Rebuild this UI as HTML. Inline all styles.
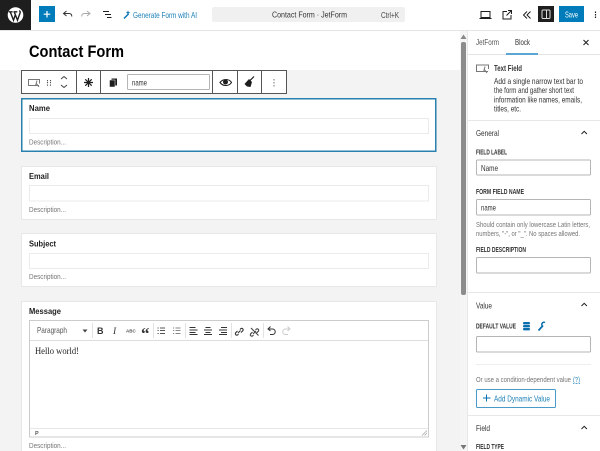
<!DOCTYPE html>
<html><head><meta charset="utf-8"><style>
html,body{margin:0;padding:0;background:#fff;width:600px;height:451px;overflow:hidden}
svg{display:block;filter:blur(.25px)}
text{font-family:"Liberation Sans",sans-serif;font-size:8.5px;fill:#1e1e1e}
.b{font-weight:bold}
.g{fill:#757575;font-size:7.6px}
.l{font-size:7px;font-weight:bold;fill:#333}
.f{font-size:8.2px;fill:#333}
.i{fill:#fff;stroke:#ebebeb;stroke-width:1}
.s{fill:#fff;stroke:#b5b5b5;stroke-width:1}
.c{fill:#fff;stroke:#e8e8e8;stroke-width:1}
.k{fill:none;stroke:#1e1e1e;stroke-width:1}
</style></head><body>
<svg width="600" height="451" viewBox="0 0 600 451" xmlns="http://www.w3.org/2000/svg">
<rect width="600" height="451" fill="#fff"/>
<!-- canvas -->
<rect x="0" y="70" width="460" height="381" fill="#f3f3f3"/>
<rect x="460" y="31" width="8" height="420" fill="#f5f5f5"/>
<rect x="461" y="42" width="5" height="253" rx="2" fill="#8c8c8c"/>
<path d="M460.500 39l3-4.500 3 4.500z" fill="#888"/>
<path d="M460.500 445l3 4.500 3-4.500z" fill="#777"/>
<!-- top bar -->
<rect x="0" y="30" width="600" height="1" fill="#e4e4e4"/>
<rect x="0" y="0" width="31" height="30" fill="#1e1e1e"/>
<circle cx="15.500" cy="15" r="7.800" fill="#fff"/>
<path d="M8.800 11.800h3.800M13.500 11.800h3.800M10.300 12l3.200 8.200 2-6M14.300 12l3.200 8.200 2.600-7.400c.4-1.200-.3-2-1-2" fill="none" stroke="#1e1e1e" stroke-width="1.400"/>
<rect x="39" y="6" width="16" height="16" fill="#007cba"/>
<path d="M47 11v6.500M43.700 14.200h6.600" stroke="#fff" stroke-width="1.200"/>
<path d="M66.500 11l-3 2.500 3 2.500M63.800 13.500h5.200c1.700 0 2.800 1 2.800 3" fill="none" stroke="#333" stroke-width="1"/>
<path d="M87 11l3 2.500-3 2.500M89.700 13.500h-5.200c-1.700 0-2.800 1-2.800 3" fill="none" stroke="#aaa" stroke-width="1"/>
<path d="M103 11.500h6M105 14.500h6M107 17.500h4.500" class="k"/>
<path d="M124 18.500l4.500-4.500" stroke="#0a76b5" stroke-width="1.500"/>
<path d="M128 10.500l.7 1.500 1.500.7-1.500.7-.7 1.500-.7-1.500-1.500-.7 1.500-.7z" fill="#0a76b5"/>
<text x="133" y="18" textLength="64" lengthAdjust="spacingAndGlyphs" style="fill:#1a7fb8;font-size:8.200px">Generate Form with AI</text>
<rect x="212" y="7" width="193" height="15" rx="2" fill="#f0f0f0"/>
<text x="272" y="17.500" textLength="75" lengthAdjust="spacingAndGlyphs" class="f">Contact Form · JetForm</text>
<text x="381" y="18" textLength="18" lengthAdjust="spacingAndGlyphs" class="f" style="fill:#444">Ctrl+K</text>
<path d="M481 11.500h9v6h-9zM479.500 18.500h12" class="k"/>
<path d="M507 11.500h-4v7.500h8v-4M506.500 15.500l5-5M508 10.500h3.500v3.500" class="k"/>
<path d="M527 11.500l-3.500 3.500 3.500 3.500M530.500 11.500l-3.500 3.500 3.500 3.500" class="k"/>
<rect x="538" y="6" width="16" height="16" fill="#1e1e1e"/>
<rect x="542" y="10" width="8" height="8.500" rx="1" fill="none" stroke="#ddd" stroke-width="1"/>
<rect x="546" y="10" width="1" height="8.500" fill="#ddd"/>
<rect x="559" y="6" width="25" height="16" fill="#007cba"/>
<text x="565" y="17.500" textLength="13" lengthAdjust="spacingAndGlyphs" style="fill:#fff;font-size:8.200px">Save</text>
<path d="M595.500 11.500v1.500M595.500 14v1.500M595.500 16.500v1.500" stroke="#1e1e1e" stroke-width="1.200"/>
<!-- title -->
<text x="29" y="57" textLength="95" lengthAdjust="spacingAndGlyphs" class="b" style="font-size:16.500px;fill:#000">Contact Form</text>
<!-- block toolbar -->
<rect x="21.500" y="70.500" width="265" height="23" fill="#fff" stroke="#555" stroke-width="1"/>
<path d="M76.500 70v24M100.500 70v24M212.500 70v24M237.500 70v24M261.500 70v24" stroke="#555" stroke-width="1"/>
<path d="M39 85.500h-10.500v-6h11v4" fill="none" stroke="#777" stroke-width="1"/>
<path d="M37 80.500l-1.500 5.500M36 83l3 4" fill="none" stroke="#777" stroke-width="1"/>
<path d="M47.500 80v1.200M47.500 82v1.200M47.500 84.500v1.200M50.500 80v1.200M50.500 82v1.200M50.500 84.500v1.200" stroke="#555" stroke-width="1.100"/>
<path d="M61 79l3-2.500 3 2.500M61 85l3 2.500 3-2.500" fill="none" stroke="#444" stroke-width="1"/>
<path d="M88.500 78v9M84 82.500h9M85.300 79.300l6.400 6.400M91.700 79.300l-6.400 6.400" stroke="#1e1e1e" stroke-width="1.200"/>
<rect x="111.500" y="78.500" width="5.500" height="7" fill="#1e1e1e"/>
<rect x="109.500" y="80" width="5.500" height="7" fill="#1e1e1e" stroke="#fff" stroke-width=".5"/>
<rect x="127.500" y="74.500" width="82" height="15" rx="1" fill="#fff" stroke="#b5b5b5" stroke-width="1"/>
<text x="132" y="85.500" textLength="15" lengthAdjust="spacingAndGlyphs" class="f">name</text>
<path d="M220 82.500c3-4 9-4 11.500 0c-2.500 4-8.500 4-11.500 0z" fill="#fff" stroke="#1e1e1e" stroke-width="1.100"/>
<circle cx="225.500" cy="82" r="2.500" fill="#1e1e1e"/>
<path d="M254 76.500l-4 4" stroke="#1e1e1e" stroke-width="1.200"/>
<path d="M249 79l3 3-1.500 5-3.500-.5-2.500-2.500z" fill="#1e1e1e"/>
<path d="M274 79v1.500M274 82v1.500M274 85v1.500" stroke="#999" stroke-width="1.400"/>
<!-- Name card -->
<rect x="21.750" y="98.750" width="414" height="52.500" fill="#fff" stroke="#2a80ae" stroke-width="1.500"/>
<text x="29" y="111" textLength="21" lengthAdjust="spacingAndGlyphs" class="b">Name</text>
<rect x="29.500" y="118.500" width="399" height="15" class="i"/>
<text x="29" y="144.500" textLength="37" lengthAdjust="spacingAndGlyphs" class="g">Description...</text>
<!-- Email -->
<rect x="21.500" y="166.500" width="415" height="53" class="c"/>
<text x="29" y="179" textLength="20" lengthAdjust="spacingAndGlyphs" class="b">Email</text>
<rect x="29.500" y="185.500" width="399" height="15.500" class="i"/>
<text x="29" y="212" textLength="37" lengthAdjust="spacingAndGlyphs" class="g">Description...</text>
<!-- Subject -->
<rect x="21.500" y="233.500" width="415" height="53" class="c"/>
<text x="29" y="246.500" textLength="27" lengthAdjust="spacingAndGlyphs" class="b">Subject</text>
<rect x="29.500" y="253.500" width="399" height="15" class="i"/>
<text x="29" y="279" textLength="37" lengthAdjust="spacingAndGlyphs" class="g">Description...</text>
<!-- Message -->
<rect x="21.500" y="301.500" width="415" height="160" class="c"/>
<text x="29" y="314" textLength="32" lengthAdjust="spacingAndGlyphs" class="b">Message</text>
<rect x="29.500" y="320.500" width="399" height="116.500" fill="#fff" stroke="#ccc" stroke-width="1"/>
<rect x="30" y="340" width="398" height="1" fill="#ddd"/>
<rect x="30" y="428" width="398" height="1" fill="#e8e8e8"/>
<text x="37" y="333" textLength="30" lengthAdjust="spacingAndGlyphs" style="font-size:8.200px;fill:#555">Paragraph</text>
<path d="M82.500 329.500h5l-2.500 3z" fill="#444"/>
<path d="M92.500 323v15M153.500 323v15M185.500 323v15M231.500 323v15M263.500 323v15" stroke="#e3e3e3"/>
<text x="97" y="334" class="b" style="font-size:9px;fill:#333">B</text>
<text x="113" y="334" style="font-size:9.500px;font-family:'Liberation Serif',serif;font-style:italic;fill:#333">I</text>
<text x="126" y="332.500" class="b" style="font-size:4.500px;fill:#555">ABC</text>
<text x="141" y="339" class="b" style="font-family:'Liberation Serif',serif;font-size:17px;fill:#333">“</text>
<path d="M160 328h5M160 330.500h5M160 333.500h5M157.500 328h1.200M157.500 330.500h1.200M157.500 333.500h1.200" stroke="#555" stroke-width=".9"/>
<path d="M175.500 328h5M175.500 330.500h5M175.500 333.500h5M173 328h1.200M173 330.500h1.200M173 333.500h1.200" stroke="#888" stroke-width=".9"/>
<path d="M189.500 327.500h6M189.500 330h8M189.500 332.500h6M189.500 334.500h8" stroke="#333" stroke-width=".9"/>
<path d="M205.500 327.500h5M204 330h8M205.500 332.500h5M204 334.500h8" stroke="#333" stroke-width=".9"/>
<path d="M221 327.500h6M219 330h8M221 332.500h6M219 334.500h8" stroke="#333" stroke-width=".9"/>
<path d="M238 333l2.500-2.500M238.500 334l-1 1a1.500 1.500 0 0 1-2-2l2-2M240 329.500l1-1a1.500 1.500 0 0 1 2 2l-2 2" fill="none" stroke="#333" stroke-width="1.100"/>
<path d="M253 334l3-3M253.500 335l-1 1a1.500 1.500 0 0 1-2-2l2-2M255.500 330l1-1a1.500 1.500 0 0 1 2 2l-2 2M251 328l7.500 7.500" fill="none" stroke="#444" stroke-width="1.100"/>
<path d="M270.500 326.500l-2.500 2.500 2.500 2M268.500 329h4a2.600 2.600 0 0 1 0 5.500h-2.500" fill="none" stroke="#333" stroke-width="1"/>
<path d="M287.500 326.500l2.500 2.500-2.500 2M289.500 329h-4a2.600 2.600 0 0 0 0 5.500h2.500" fill="none" stroke="#ccc" stroke-width="1"/>
<text x="35" y="354" textLength="44" lengthAdjust="spacingAndGlyphs" style="font-family:'Liberation Serif',serif;font-size:9.500px;fill:#222">Hello world!</text>
<text x="35" y="435" class="b" style="font-size:5.500px;fill:#555">P</text>
<path d="M427 430.500l-5 5M427 433l-2.500 2.500" stroke="#aaa" stroke-width=".8"/>
<text x="29" y="448" textLength="37" lengthAdjust="spacingAndGlyphs" class="g">Description...</text>
<!-- sidebar -->
<rect x="468" y="31" width="132" height="420" fill="#fff"/>
<rect x="467" y="31" width="1" height="420" fill="#e8e8e8"/>
<rect x="468" y="54" width="132" height="1" fill="#e4e4e4"/>
<text x="476" y="45" textLength="23" lengthAdjust="spacingAndGlyphs" class="f" style="fill:#555">JetForm</text>
<text x="515" y="45" textLength="15" lengthAdjust="spacingAndGlyphs" class="f">Block</text>
<rect x="506" y="53" width="32" height="2" fill="#5aa5d2"/>
<path d="M583.500 40l5 5M588.500 40l-5 5" stroke="#1e1e1e" stroke-width="1"/>
<path d="M488 71.500h-11.500v-6.500h12v4" fill="none" stroke="#777" stroke-width="1"/>
<path d="M485 66.500l-1.500 5.500M484 69l3 4" fill="none" stroke="#777" stroke-width="1"/>
<text x="494" y="71" textLength="28" lengthAdjust="spacingAndGlyphs" class="b f">Text Field</text>
<text x="494" y="84" textLength="89" lengthAdjust="spacingAndGlyphs" class="f">Add a single narrow text bar to</text>
<text x="494" y="93" textLength="80" lengthAdjust="spacingAndGlyphs" class="f">the form and gather short text</text>
<text x="494" y="102.500" textLength="88" lengthAdjust="spacingAndGlyphs" class="f">information like names, emails,</text>
<text x="494" y="111.500" textLength="27" lengthAdjust="spacingAndGlyphs" class="f">titles, etc.</text>
<rect x="468" y="120" width="132" height="1" fill="#e8e8e8"/>
<text x="476" y="136" textLength="23" lengthAdjust="spacingAndGlyphs" class="f">General</text>
<path d="M581.500 134l2.700-2.700 2.700 2.700" class="k"/>
<text x="476" y="154.500" textLength="31" lengthAdjust="spacingAndGlyphs" class="l">FIELD LABEL</text>
<rect x="476.500" y="160" width="114" height="15" rx="1" class="s"/>
<text x="481" y="171" textLength="17" lengthAdjust="spacingAndGlyphs" class="f">Name</text>
<text x="476" y="194" textLength="48" lengthAdjust="spacingAndGlyphs" class="l">FORM FIELD NAME</text>
<rect x="476.500" y="199.500" width="114" height="15.500" rx="1" class="s"/>
<text x="481" y="210.500" textLength="15" lengthAdjust="spacingAndGlyphs" class="f">name</text>
<text x="476" y="227" textLength="114" lengthAdjust="spacingAndGlyphs" class="g">Should contain only lowercase Latin letters,</text>
<text x="476" y="236" textLength="104" lengthAdjust="spacingAndGlyphs" class="g">numbers, "-", or "_". No spaces allowed.</text>
<text x="476" y="252" textLength="50" lengthAdjust="spacingAndGlyphs" class="l">FIELD DESCRIPTION</text>
<rect x="476.500" y="257.500" width="114" height="15.500" rx="1" class="s"/>
<rect x="468" y="292" width="132" height="1" fill="#e8e8e8"/>
<text x="476" y="308.500" textLength="16" lengthAdjust="spacingAndGlyphs" class="f">Value</text>
<path d="M581.500 306l2.700-2.700 2.700 2.700" class="k"/>
<text x="476" y="328.500" textLength="40" lengthAdjust="spacingAndGlyphs" class="l">DEFAULT VALUE</text>
<rect x="523" y="322" width="7" height="2.400" rx="1" fill="#0a6fae"/>
<rect x="523" y="325" width="7" height="2.400" rx="1" fill="#0a6fae"/>
<rect x="523" y="328" width="7" height="2.400" rx="1" fill="#0a6fae"/>
<path d="M538.500 330.500l4.500-5" stroke="#0a6fae" stroke-width="1.700"/>
<path d="M543 326.500a2.200 2.200 0 0 1 2-4" fill="none" stroke="#0a6fae" stroke-width="1.500"/>
<rect x="476.500" y="336.500" width="114" height="15.500" rx="1" class="s"/>
<rect x="476" y="364" width="115" height="1" fill="#eee"/>
<text x="476" y="382" textLength="95" lengthAdjust="spacingAndGlyphs" class="g">Or use a condition-dependent value</text>
<text x="573" y="382" textLength="7" lengthAdjust="spacingAndGlyphs" style="font-size:7.600px;fill:#2a85bb;text-decoration:underline">(?)</text>
<rect x="476.500" y="389.500" width="79" height="18" rx="1" fill="#fff" stroke="#4a9ac8"/>
<path d="M486.500 394.500v7M483 398h7.500" stroke="#0a6fae" stroke-width="1"/>
<text x="494" y="401.500" textLength="56" lengthAdjust="spacingAndGlyphs" style="font-size:8.200px;fill:#1a7fb8">Add Dynamic Value</text>
<rect x="468" y="415" width="132" height="1" fill="#e8e8e8"/>
<text x="476" y="431" textLength="14" lengthAdjust="spacingAndGlyphs" class="f">Field</text>
<path d="M581.500 429l2.700-2.700 2.700 2.700" class="k"/>
<text x="476" y="449" textLength="28" lengthAdjust="spacingAndGlyphs" class="l">FIELD TYPE</text>
</svg>
</body></html>
